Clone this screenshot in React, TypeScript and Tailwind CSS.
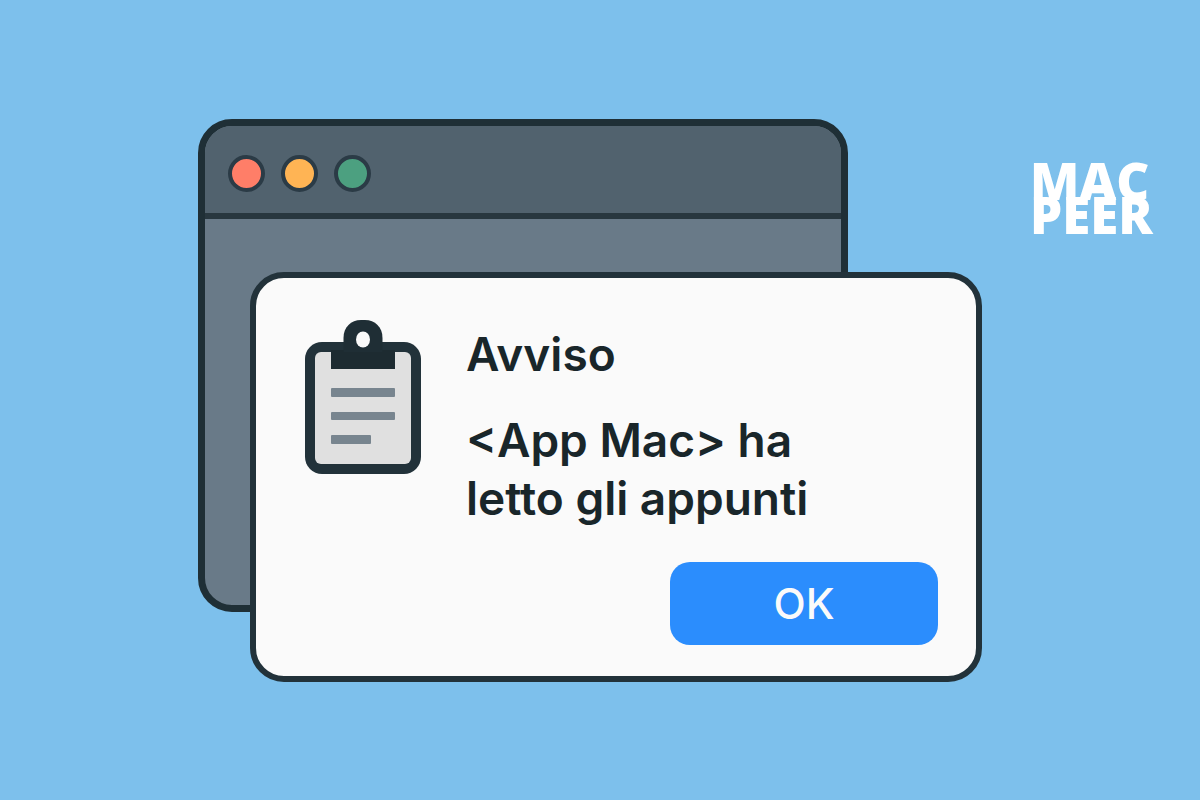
const TRAFFIC_LIGHTS = [
  { name: 'close', color: 'bg-[#ff7e68]' },
  { name: 'minimize', color: 'bg-[#ffb454]' },
  { name: 'zoom', color: 'bg-[#4ca080]' },
]

function ClipboardIcon() {
  return (
    <svg width="116" height="154" viewBox="0 0 116 154" className="shrink-0" aria-hidden="true">
      <rect x="0" y="22" width="116" height="132" rx="17" fill="#22323a" />
      <rect x="10" y="32" width="96" height="112" rx="6" fill="#e0e0e0" />
      <path d="M26 30H90V49H26Z" fill="#1d2b31" />
      <path d="M38.5 32V18C38.5 7 46 0 56 0H60C70 0 77.5 7 77.5 18V32Z" fill="#1f2e35" />
      <ellipse cx="58" cy="19.5" rx="7" ry="8" fill="#fafafa" />
      <g fill="#78858f">
        <rect x="26" y="68" width="64" height="9" rx="1" />
        <rect x="26" y="92" width="64" height="8" rx="1" />
        <rect x="26" y="115" width="40" height="9" rx="1" />
      </g>
    </svg>
  )
}

function BackgroundWindow() {
  return (
    <div className="col-start-1 row-start-1 mr-[134px] mb-[70px] overflow-hidden rounded-[34px] border-[7px] border-[#1f2f36] bg-[#697a88]">
      <div className="flex h-[93px] items-center gap-4 border-b-6 border-[#28373f] bg-[#51626e] px-[23px] pt-2">
        {TRAFFIC_LIGHTS.map((light) => (
          <button
            key={light.name}
            type="button"
            aria-label={light.name}
            className={`size-[37px] rounded-full border-4 border-[#2b3b46] ${light.color}`}
          />
        ))}
      </div>
    </div>
  )
}

function AlertDialog() {
  return (
    <section
      role="alertdialog"
      aria-labelledby="alert-title"
      aria-describedby="alert-message"
      className="relative col-start-1 row-start-1 mt-[153px] ml-[52px] flex flex-col rounded-[34px] border-[6px] border-[#22323a] bg-[#fafafa] pt-[42px] pr-[38px] pb-[31px] pl-[49px]"
    >
      <div className="flex items-start gap-[45px]">
        <ClipboardIcon />
        <div className="pt-[5px] text-[46px] leading-[58px] font-semibold text-[#19262a]">
          <h1 id="alert-title">Avviso</h1>
          <p id="alert-message" className="mt-7">
            &lt;App Mac&gt; ha
            <br />
            letto gli appunti
          </p>
        </div>
      </div>
      <button
        type="button"
        className="mt-[35px] h-[83px] w-[268px] self-end rounded-[20px] bg-[#2b8dfd] text-[42px] font-medium text-[#fafafa]"
      >
        OK
      </button>
    </section>
  )
}

function Logo() {
  return (
    <div className="mt-11 ml-12 font-['Open_Sans',sans-serif] text-[51px] leading-[34px] font-extrabold text-white">
      MAC
      <br />
      PEER
    </div>
  )
}

export default function App() {
  return (
    <main className="grid min-h-screen grid-cols-[1fr_minmax(0,784px)_1fr] content-center bg-[#7dc0ec] pr-5 font-['Inter',sans-serif]">
      <div className="col-start-2 grid">
        <BackgroundWindow />
        <AlertDialog />
      </div>
      <Logo />
    </main>
  )
}
